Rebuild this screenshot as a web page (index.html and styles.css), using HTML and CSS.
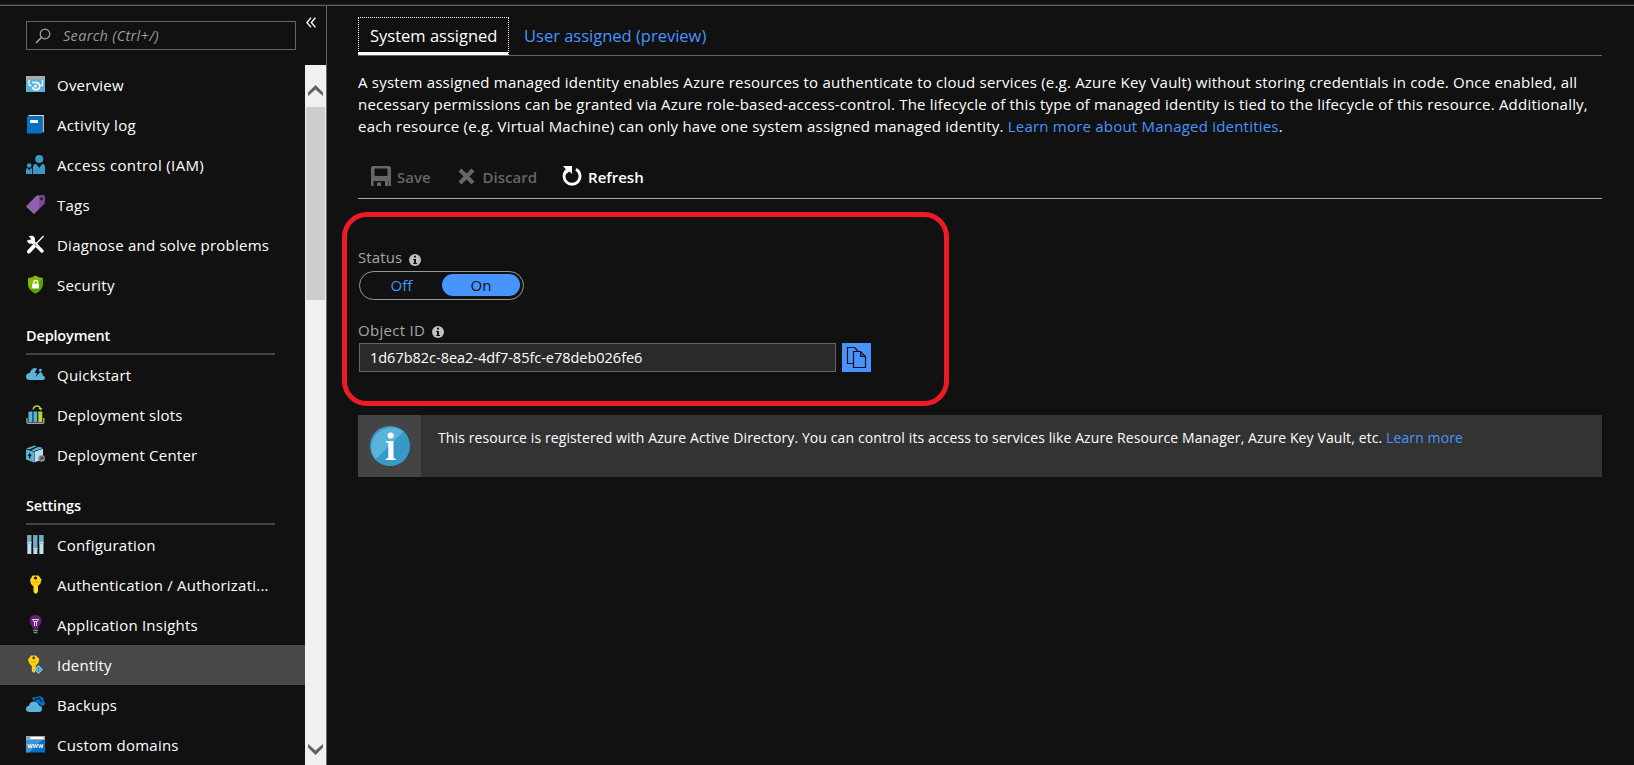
FILE: index.html
```
<!DOCTYPE html>
<html lang="en">
<head>
<meta charset="utf-8">
<title>Identity</title>
<link rel="stylesheet" href="styles.css">
</head>
<body>
<div class="app">
  <aside class="sidebar">
    <div class="side-top">
      <div class="search">
        <svg class="search-icon" width="16" height="16" viewBox="0 0 16 16"><circle cx="10" cy="6" r="4.8" fill="none" stroke="#a8a8a8" stroke-width="1.2"/><path d="M6.4 9.4 1 15" stroke="#a8a8a8" stroke-width="1.5"/></svg>
        <span class="placeholder">Search (Ctrl+/)</span>
      </div>
      <svg class="collapse" width="10" height="11" viewBox="0 0 10 11"><path d="M5 .8.9 5.5 5 10.2M9.4.8 5.3 5.5l4.1 4.7" fill="none" stroke="#fff" stroke-width="1.3"/></svg>
    </div>
    <div class="side-body">
      <nav class="menu">
        <a class="item"><svg class="icon" viewBox="0 0 19 19"><path d="M0 4h19v13H0z" fill="#59b4d9"/><path d="M0 1h19v3.500H0z" fill="#a9a9a9"/><path d="M3 5v4.500q0 1 1 1h1.500M16.500 5v4.500q0 1-1 1H14" fill="none" stroke="#fff" stroke-width="1.300"/><path d="M6 7.500h4a3.600 3.600 0 1 1-3.500 4.500" fill="none" stroke="#fff" stroke-width="1.600"/><circle cx="9.500" cy="11" r="1.500" fill="#fff"/></svg><span>Overview</span></a>
        <a class="item loose"><svg class="icon" viewBox="0 0 19 19"><path d="M2.500.700h14.700v16.500" fill="none" stroke="#dce6ee" stroke-width="1.200"/><path d="M1 1.300h15V18.500H1z" fill="#0072c6"/><path d="M4 5h8v3H4z" fill="#fff"/></svg><span>Activity log</span></a>
        <a class="item loose"><svg class="icon" viewBox="0 0 19 19"><g fill="#3999c6"><circle cx="13.200" cy="4" r="4"/><path d="M7 19V12q0-3 3-3.200l3.200 4 3.200-4q2.600.2 2.600 3.200v7z"/><circle cx="3.200" cy="10.500" r="2.300"/><path d="M0 19v-4q0-1.700 1.500-1.900l1.700 2.200 1.700-2.200q1.300.2 1.300 1.900v4z"/></g></svg><span>Access control (IAM)</span></a>
        <a class="item"><svg class="icon" viewBox="0 0 19 19"><path d="M10.500.800 17 0q2 0 2 2.200l-.3 6.300L8 19 0 11.500z" fill="#804998"/><path d="M10.500.800 13 .500V14L8 19 0 11.500z" fill="#9b6bb3" opacity=".65"/><circle cx="15.500" cy="3.800" r="1.600" fill="#252525"/></svg><span>Tags</span></a>
        <a class="item"><svg class="icon" viewBox="0 0 19 19"><path d="M5 5 16 16" stroke="#fff" stroke-width="3.400" stroke-linecap="round"/><circle cx="5" cy="4.700" r="4" fill="#fff"/><path d="M1.500-.5 5.300 4.200 1.500 5.500 0 2z" fill="#111"/><path d="M17.500 1 10 9" stroke="#fff" stroke-width="1.300"/><path d="M9 10 3 16.500" stroke="#fff" stroke-width="4" stroke-linecap="round"/><path d="m8 8.500 3 3" stroke="#111" stroke-width=".7"/></svg><span>Diagnose and solve problems</span></a>
        <a class="item"><svg class="icon" viewBox="0 0 19 19"><path d="M9.500.500Q12.500 3 17 3v6q0 6-7.500 9.800Q2 15 2 9V3q4.500 0 7.500-2.500z" fill="#57a300"/><path d="M9.500.500Q12.500 3 17 3L4.500 15Q2 12.500 2 9V3q4.500 0 7.500-2.500z" fill="#7fba00"/><path d="M6.200 8.500h6.800v5H6.200z" fill="#fff"/><path d="M7.700 8.500V7.400q0-1.900 2-1.900t2 1.900v1.100" fill="none" stroke="#fff" stroke-width="1.300"/></svg><span>Security</span></a>
        <h2 class="heading">Deployment</h2>
        <a class="item"><svg class="icon" viewBox="0 0 19 19"><path d="M3.500 15Q0 15 0 11.500 0 8.300 4 8q.7-4.700 5-5 2.300 0 3.500 1.500Q14 3 16 4.500l-1 3q2 1 2 3 2 .5 2 2.500 0 2-2.500 2z" fill="#59b4d9"/><path d="m12 2-3.500 6h2.700L9.500 12l5.500-5.800h-2.700L14.500 2z" fill="#111"/></svg><span>Quickstart</span></a>
        <a class="item"><svg class="icon" viewBox="0 0 19 19"><path d="M1 13v4.200q0 1 1 1h14.800q1 0 1-1V13" fill="none" stroke="#a0a1a2" stroke-width="1.400"/><path d="M2.500 6.500h4V17h-4zM7.500 6.500h3.700V17H7.500z" fill="#59b4d9"/><path d="M12.300 6.500h4V17h-4z" fill="#b8d432"/><path d="M7 4.500q1-3.500 4-3.500t3.500 3" fill="none" stroke="#b8d432" stroke-width="1.400"/><path d="m12.300 3 2.400 2.500L16.500 3z" fill="#b8d432"/></svg><span>Deployment slots</span></a>
        <a class="item"><svg class="icon" viewBox="0 0 19 19"><path d="m0 4.500 8 2.300v10.700L0 14.500z" fill="#59b4d9"/><path d="m8.500 6.800 8.500-3V14l-8.500 3.500z" fill="#b6def0"/><path d="m0 3.500 8.500-3 2 .700-7.300 3.300zM5 5.200 12.500 1.700l4.500 1.300-9 3.200z" fill="#59b4d9"/><path d="M3.700 13.500v-4M2.200 10.800 3.700 9l1.500 2.200" fill="none" stroke="#111" stroke-width="1.200"/><circle cx="15.700" cy="13.500" r="3.300" fill="#8a8a8a"/><path d="m14 14.800 3-2.500M14.500 12.300h2.500v2" fill="none" stroke="#333" stroke-width="1"/></svg><span>Deployment Center</span></a>
        <h2 class="heading">Settings</h2>
        <a class="item"><svg class="icon" viewBox="0 0 19 19"><path d="M1 0h4.500v19H1zM7 0h4.500v19H7zM13 0h4.700v19H13z" fill="#8d9599"/><path d="M2 1h3v6H2zM8 1h3v11.500H8zM14 1h3v6h-3z" fill="#59b4d9"/><path d="M2 9h3v10H2zM8 15h3v4H8zM14 9h3v10h-3z" fill="#b8e4f5"/><path d="M1.500 7h4v1.500h-4zM7.500 13h4v1.500h-4zM13.500 7h4v1.500h-4z" fill="#d6dadb"/></svg><span>Configuration</span></a>
        <a class="item"><svg class="icon" viewBox="0 0 19 19"><path fill="#fcd116" fill-rule="evenodd" d="M6.500.500h6l3 4-1 4-2.500 2.500V17L9.700 19 7.500 17v-5.500L5 9 4 5zm3 1a1.500 1.500 0 1 0 .01 3 1.500 1.500 0 1 0 0-3z"/><path d="M7 7.200h5.500" stroke="#e8a900"/><path d="M9.500 11v7" stroke="#fff08a" stroke-width=".8"/></svg><span>Authentication / Authorizati...</span></a>
        <a class="item"><svg class="icon" viewBox="0 0 19 19"><path d="M9.500 0Q15.500.500 15.500 6q0 2.500-2.500 5l-1 3H7l-1-3Q3.500 8.500 3.500 6 3.500.500 9.500 0z" fill="#68217a"/><path d="M6.500 4.500h6L11.300 6.500H7.700zM8.500 6v5M10.500 6v5" fill="none" stroke="#e8d8ee" stroke-width="1"/><path d="M7 15.300h5M7.700 17.500h3.600" stroke="#8f8f8f" stroke-width="1.300"/></svg><span>Application Insights</span></a>
        <a class="item selected"><svg class="icon" viewBox="0 0 19 19"><path fill="#fcd116" fill-rule="evenodd" d="M5 .500h5l3.300 3.500-1 4-2.500 2.500V16L7.700 18 5.800 16v-5L3.300 8.500 2 4.500zm2.700 1a1.400 1.400 0 1 0 .01 2.800 1.400 1.400 0 1 0 0-2.800z"/><path d="M5.200 7h5" stroke="#e8a900"/><path d="m12.500 10 4.500 4.500-4.500 4.500L8 14.500z" fill="#7fcdea"/><path d="M12.500 11.500v6M10 14.500l2.500-2 2.500 2-2.500 2z" fill="none" stroke="#2587b5" stroke-width=".8"/></svg><span>Identity</span></a>
        <a class="item"><svg class="icon" viewBox="0 0 19 19"><path d="M7 5q-1-2 0-3 2 0 2.500.800Q11.500.500 15 1.500q3 1 2.500 4 1.500 1 1.500 3-.5 2.500-3 2.500L12 8z" fill="#0072c6"/><path d="m8 5.500 5-2.500 3 4" fill="none" stroke="#111" stroke-width="1.200"/><path d="M3.500 17Q0 17 0 14q0-2.800 3-3.300Q3.500 7 7.500 6.500q4 0 5.500 4 3 .300 3 3.300Q16 17 13 17z" fill="#59b4d9"/></svg><span>Backups</span></a>
        <a class="item"><svg class="icon" viewBox="0 0 19 19"><path d="M0 1h19v16.500H0z" fill="#0072c6"/><path d="M0 5h16L3 17.500H0z" fill="#3e95d4"/><path d="M0 1h19v4H0z" fill="#a5a8aa"/><path d="M4.500 2h13v2h-13z" fill="#fff"/><circle cx="2.500" cy="3" r="1.200" fill="#59b4d9"/><path d="m2 9 1 4 1.200-3.500L5.300 13l1-4M7.300 9l1 4 1.200-3.500L10.600 13l1-4M12.600 9l1 4 1.200-3.500L15.900 13l1-4" fill="none" stroke="#fff" stroke-width=".9"/></svg><span>Custom domains</span></a>
      </nav>
      <div class="scrollbar">
        <svg class="arrow" viewBox="0 0 15 12"><path d="M0 11V7.500L7.500 0 15 7.500V11L7.500 4.500z" fill="#606060"/></svg>
        <div class="thumb"></div>
        <svg class="arrow down" viewBox="0 0 15 12"><path d="M0 1v3.500L7.500 12 15 4.500V1L7.500 7.500z" fill="#606060"/></svg>
      </div>
    </div>
  </aside>
  <main class="main">
    <div class="tabs">
      <a class="tab active">System assigned</a>
      <a class="tab">User assigned (preview)</a>
    </div>
    <p class="desc">A system assigned managed identity enables Azure resources to authenticate to cloud services (e.g. Azure Key Vault) without storing credentials in code. Once enabled, all<br>necessary permissions can be granted via Azure role-based-access-control. The lifecycle of this type of managed identity is tied to the lifecycle of this resource. Additionally,<br>each resource (e.g. Virtual Machine) can only have one system assigned managed identity. <a class="link">Learn more about Managed identities</a>.</p>
    <div class="toolbar">
      <a class="cmd save disabled"><svg width="20" height="20" viewBox="0 0 20 20"><path fill="currentColor" fill-rule="evenodd" d="M1.500 0h17L20 1.500V20h-2.500v-5h-15v5H0V1.500zM3.500 2.500v6.500q0 1 1 1h11q1 0 1-1V2.500z"/><path fill="currentColor" d="M6 16.500h4V20H6zM14 15h3v5h-3z"/></svg><span>Save</span></a>
      <a class="cmd discard disabled"><svg width="17" height="17" viewBox="0 0 17 17"><path d="m2 2 13 13M15 2 2 15" stroke="currentColor" stroke-width="4.200"/></svg><span>Discard</span></a>
      <a class="cmd refresh"><svg width="20" height="20" viewBox="0 0 20 20"><path d="M5 4A8 8 0 1 0 14 3.300" fill="none" stroke="currentColor" stroke-width="2.800"/><path d="M1 0h9v8L7.500 5.500 4 8 2 5.500l2-2z" fill="currentColor"/></svg><span>Refresh</span></a>
    </div>
    <section class="form">
      <div class="label status-label"><span>Status</span><svg width="12" height="12" viewBox="0 0 12 12"><circle cx="6" cy="6" r="6" fill="#bfbfbf"/><path d="M5 1.800h2v1.700H5zM4.200 5H7v4h1v1H4.200V9H5V6h-.8z" fill="#111"/></svg></div>
      <div class="toggle"><span class="off">Off</span><span class="on">On</span></div>
      <div class="label object-label"><span>Object ID</span><svg width="12" height="12" viewBox="0 0 12 12"><circle cx="6" cy="6" r="6" fill="#bfbfbf"/><path d="M5 1.800h2v1.700H5zM4.200 5H7v4h1v1H4.200V9H5V6h-.8z" fill="#111"/></svg></div>
      <div class="field">
        <div class="input">1d67b82c-8ea2-4df7-85fc-e78deb026fe6</div>
        <a class="copy"><svg width="29" height="29" viewBox="0 0 29 29"><path d="M11 20.500H5.500v-16h7l3.500 3.500" fill="none" stroke="#111" stroke-width="1.200"/><path d="M11.500 8.500h7l5 5v11h-12z" fill="#4894fe" stroke="#111" stroke-width="1.200"/><path d="M18.500 8.500v5h5z" fill="#2a5694" stroke="#111"/></svg></a>
      </div>
    </section>
    <div class="banner">
      <div class="banner-icon"><svg width="40" height="40" viewBox="0 0 40 40"><circle cx="20" cy="20" r="20" fill="#3999c6"/><path d="M5.500 33.500A20 20 0 0 1 33.500 5.500z" fill="#59b4d9"/><circle cx="20.700" cy="9.500" r="3.100" fill="#fff"/><path d="M16 15h7.500v17l2.300.700V34H15.700v-1.300l2.600-.7V17l-2.300-.7z" fill="#fff"/></svg></div>
      <p class="banner-text">This resource is registered with Azure Active Directory. You can control its access to services like Azure Resource Manager, Azure Key Vault, etc. <a class="link">Learn more</a></p>
    </div>
  </main>
  <div class="highlight"></div>
</div>
</body>
</html>
```
FILE: styles.css
```
* { box-sizing: border-box; }
body { margin: 0; background: #111; color: #fff; font: 15px/22px "Open Sans", "Segoe UI", sans-serif; }
.app { position: relative; display: flex; width: 1634px; height: 765px; padding-top: 6px; overflow: hidden; background: linear-gradient(#111 4px, #292929 4px, #292929 5px, #606060 5px, #606060 6px, #111 6px); }
.sidebar { flex: none; width: 327px; border-right: 1px solid #666; display: flex; flex-direction: column; }
.side-top { display: flex; height: 59px; padding: 15px 0 0 26px; }
.search { display: flex; align-items: center; width: 270px; height: 29px; border: 1px solid #666; padding-left: 8px; }
.placeholder { margin-left: 12px; color: #999; font-style: italic; font-size: 14.5px; letter-spacing: .3px; }
.collapse { margin: -4px 0 0 10px; }
.side-body { display: flex; flex: 1; }
.menu { width: 305px; }
.item { display: flex; align-items: center; height: 40px; padding-left: 26px; white-space: nowrap; letter-spacing: .23px; }
.item.loose { letter-spacing: .35px; }
.item.selected { background: #484848; }
.icon { flex: none; width: 19px; height: 19px; margin: -1px 12px 0 0; }
.heading { width: 249px; height: 50px; margin: 0 0 0 26px; padding-top: 20px; border-bottom: 2px solid #444; font-size: 14.5px; line-height: 22px; font-weight: 600; letter-spacing: -.17px; }
.scrollbar { display: flex; flex-direction: column; align-items: center; width: 21px; background: #f0f0f0; }
.arrow { width: 15px; height: 12px; margin: 20px 0 10px; }
.arrow.down { margin: auto 0 10px; }
.thumb { width: 19px; height: 193px; background: #cdcdcd; }
.main { flex: 1; padding: 11px 32px 0 31px; }
.tabs { display: flex; height: 39px; border-bottom: 1px solid #666; font-size: 16.5px; line-height: 36px; white-space: nowrap; }
.tab { height: 38px; color: #4894fe; padding: 1px 0 0 15px; }
.tab.active { width: 151px; color: #fff; padding: 0 0 0 11px; border: 1px dotted #fff; border-bottom: 3px solid #fff; }
.desc { margin: 15px 0 1px; white-space: nowrap; letter-spacing: .21px; }
.link { color: #4894fe; }
.toolbar { display: flex; height: 61px; border-bottom: 1px solid #aaa; font-weight: 600; padding: 28px 0 0 13px; }
.cmd { display: flex; }
.cmd svg { flex: none; }
.cmd span { margin-left: 6px; }
.disabled { color: #666; }
.discard { margin-left: 27px; }
.discard svg { margin-top: 2px; }
.discard span { margin-left: 8px; }
.refresh { margin-left: 25px; }
.refresh span { margin-left: 6px; }
.form { height: 216px; padding-top: 47px; }
.label { display: flex; color: #a6a6a6; height: 25px; gap: 7px; letter-spacing: .1px; }
.label svg { margin-top: 8px; }
.object-label { height: 24px; margin-top: 19px; letter-spacing: .3px; }
.object-label svg { margin-top: 7px; }
.toggle { display: flex; width: 165px; height: 29px; border: 1px solid #999; border-radius: 15px; margin-left: 1px; padding: 2px 3px 3px; line-height: 23px; }
.off { width: 79px; padding-right: 2px; text-align: center; color: #4894fe; }
.on { width: 78px; height: 22px; border-radius: 11px; text-align: center; color: #111; background: #4894fe; }
.field { display: flex; gap: 6px; margin-left: 1px; }
.input { width: 477px; height: 29px; border: 1px solid #666; background: #2a2a2a; padding: 3px 0 0 10px; font-size: 14.5px; letter-spacing: -.02px; }
.copy { width: 29px; height: 29px; background: #4894fe; }
.banner { display: flex; height: 62px; background: #333; }
.banner-icon { width: 63px; background: #444; padding: 11px 11px 11px 12px; }
.banner-text { margin: 12px 0 0 17px; font-size: 14px; letter-spacing: .103px; white-space: nowrap; }
.highlight { position: absolute; left: 342px; top: 212px; width: 607px; height: 194px; border: 5px solid #ed1c24; border-radius: 25px; }
```
